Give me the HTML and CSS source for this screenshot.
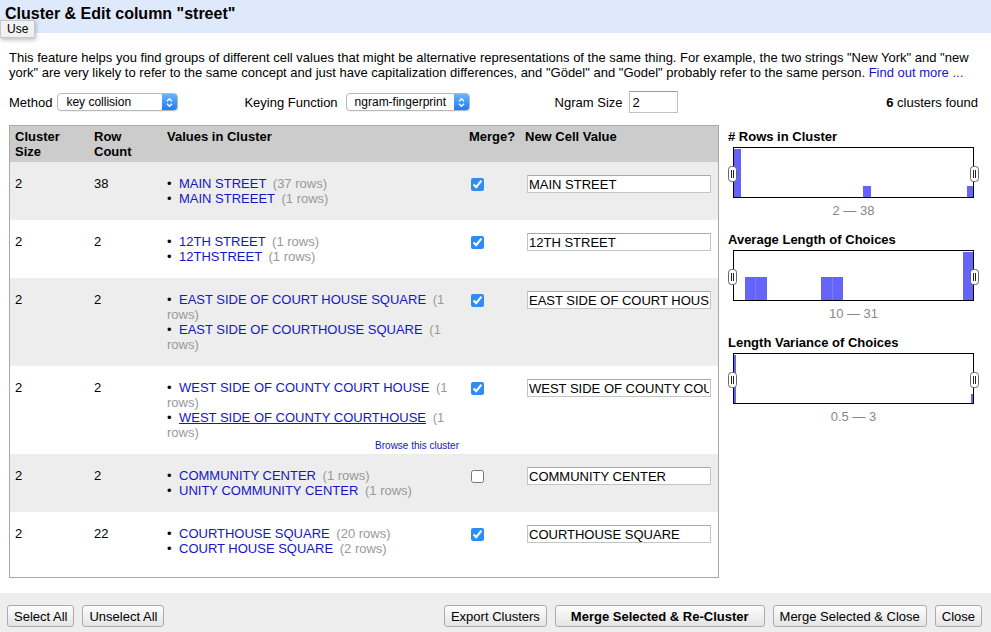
FILE: index.html
```html
<!DOCTYPE html>
<html>
<head>
<meta charset="utf-8">
<title>Cluster &amp; Edit column "street"</title>
<link rel="stylesheet" href="styles.css">
</head>
<body>
<div class="dialog">
  <div class="titlebar">Cluster &amp; Edit column "street"</div>
  <div class="tooltip">Use</div>
  <div class="content">
    <p class="desc">This feature helps you find groups of different cell values that might be alternative representations of the same thing. For example, the two strings "New York" and "new york" are very likely to refer to the same concept and just have capitalization differences, and "Gödel" and "Godel" probably refer to the same person. <a href="#">Find out more ...</a></p>

    <div class="controls">
      <span class="label">Method</span>
      <div class="select sel-method">
        <select><option>key collision</option></select>
        <span class="stepper"><svg width="7" height="11" viewBox="0 0 7 11"><path d="M1 4.2 L3.5 1.7 L6 4.2 M1 6.8 L3.5 9.3 L6 6.8" fill="none" stroke="#fff" stroke-width="1.3"/></svg></span>
      </div>
      <span class="label lbl-keying">Keying Function</span>
      <div class="select sel-keying">
        <select><option>ngram-fingerprint</option></select>
        <span class="stepper"><svg width="7" height="11" viewBox="0 0 7 11"><path d="M1 4.2 L3.5 1.7 L6 4.2 M1 6.8 L3.5 9.3 L6 6.8" fill="none" stroke="#fff" stroke-width="1.3"/></svg></span>
      </div>
      <span class="label lbl-ngram">Ngram Size</span>
      <input class="ngram" type="text" value="2">
      <span class="found"><b>6</b> clusters found</span>
    </div>

    <div class="main">
      <div class="table-wrap">
        <table class="clusters">
          <colgroup>
            <col class="w1"><col class="w2"><col class="w3"><col class="w4"><col class="w5">
          </colgroup>
          <thead>
            <tr><th>Cluster Size</th><th>Row Count</th><th>Values in Cluster</th><th class="c-merge">Merge?</th><th>New Cell Value</th></tr>
          </thead>
          <tbody>
            <tr class="odd">
              <td>2</td><td>38</td>
              <td><ul class="values"><li><a href="#">MAIN STREET</a> <span class="count">(37 rows)</span></li><li><a href="#">MAIN STREEET</a> <span class="count">(1 rows)</span></li></ul></td>
              <td class="c-merge"><input type="checkbox" checked></td>
              <td class="c-new"><input class="newval" type="text" value="MAIN STREET"></td>
            </tr>
            <tr>
              <td>2</td><td>2</td>
              <td><ul class="values"><li><a href="#">12TH STREET</a> <span class="count">(1 rows)</span></li><li><a href="#">12THSTREET</a> <span class="count">(1 rows)</span></li></ul></td>
              <td class="c-merge"><input type="checkbox" checked></td>
              <td class="c-new"><input class="newval" type="text" value="12TH STREET"></td>
            </tr>
            <tr class="odd">
              <td>2</td><td>2</td>
              <td><ul class="values"><li><a href="#">EAST SIDE OF COURT HOUSE SQUARE</a> <span class="count">(1 rows)</span></li><li><a href="#">EAST SIDE OF COURTHOUSE SQUARE</a> <span class="count">(1 rows)</span></li></ul></td>
              <td class="c-merge"><input type="checkbox" checked></td>
              <td class="c-new"><input class="newval" type="text" value="EAST SIDE OF COURT HOUSE SQUARE"></td>
            </tr>
            <tr>
              <td>2</td><td>2</td>
              <td class="c-values"><ul class="values"><li><a href="#">WEST SIDE OF COUNTY COURT HOUSE</a> <span class="count">(1 rows)</span></li><li><a href="#" class="hover">WEST SIDE OF COUNTY COURTHOUSE</a> <span class="count">(1 rows)</span></li></ul><a href="#" class="browse">Browse this cluster</a></td>
              <td class="c-merge"><input type="checkbox" checked></td>
              <td class="c-new"><input class="newval" type="text" value="WEST SIDE OF COUNTY COURTHOUSE"></td>
            </tr>
            <tr class="odd">
              <td>2</td><td>2</td>
              <td><ul class="values"><li><a href="#">COMMUNITY CENTER</a> <span class="count">(1 rows)</span></li><li><a href="#">UNITY COMMUNITY CENTER</a> <span class="count">(1 rows)</span></li></ul></td>
              <td class="c-merge"><input type="checkbox"></td>
              <td class="c-new"><input class="newval" type="text" value="COMMUNITY CENTER"></td>
            </tr>
            <tr>
              <td>2</td><td>22</td>
              <td><ul class="values"><li><a href="#">COURTHOUSE SQUARE</a> <span class="count">(20 rows)</span></li><li><a href="#">COURT HOUSE SQUARE</a> <span class="count">(2 rows)</span></li></ul></td>
              <td class="c-merge"><input type="checkbox" checked></td>
              <td class="c-new"><input class="newval" type="text" value="COURTHOUSE SQUARE"></td>
            </tr>
          </tbody>
        </table>
      </div>

      <div class="facets">
        <div class="facet">
          <h3># Rows in Cluster</h3>
          <div class="hist">
            <svg width="239" height="49" viewBox="0 0 239 49">
              <rect x="0" y="1" width="7" height="48" fill="#6464fa"/>
              <rect x="129" y="38" width="8" height="11" fill="#6464fa"/>
              <rect x="233" y="38" width="6" height="11" fill="#6464fa"/>
            </svg>
            <span class="handle h-left"><svg width="9" height="16" viewBox="0 0 9 16"><rect x="0.5" y="0.5" width="8" height="15" rx="3" fill="#fff" stroke="#666"/><path d="M3.5 4 V12 M5.5 4 V12" stroke="#222" stroke-width="1"/></svg></span>
            <span class="handle h-right"><svg width="9" height="16" viewBox="0 0 9 16"><rect x="0.5" y="0.5" width="8" height="15" rx="3" fill="#fff" stroke="#666"/><path d="M3.5 4 V12 M5.5 4 V12" stroke="#222" stroke-width="1"/></svg></span>
          </div>
          <div class="range">2 — 38</div>
        </div>
        <div class="facet">
          <h3>Average Length of Choices</h3>
          <div class="hist">
            <svg width="239" height="49" viewBox="0 0 239 49">
              <rect x="11" y="26" width="22" height="23" fill="#6464fa"/>
              <path d="M21.5 26 V49" stroke="#7c7cfb" stroke-width="1"/>
              <rect x="87" y="26" width="22" height="23" fill="#6464fa"/>
              <path d="M98.5 26 V49" stroke="#7c7cfb" stroke-width="1"/>
              <rect x="229" y="1" width="10" height="48" fill="#6464fa"/>
            </svg>
            <span class="handle h-left"><svg width="9" height="16" viewBox="0 0 9 16"><rect x="0.5" y="0.5" width="8" height="15" rx="3" fill="#fff" stroke="#666"/><path d="M3.5 4 V12 M5.5 4 V12" stroke="#222" stroke-width="1"/></svg></span>
            <span class="handle h-right"><svg width="9" height="16" viewBox="0 0 9 16"><rect x="0.5" y="0.5" width="8" height="15" rx="3" fill="#fff" stroke="#666"/><path d="M3.5 4 V12 M5.5 4 V12" stroke="#222" stroke-width="1"/></svg></span>
          </div>
          <div class="range">10 — 31</div>
        </div>
        <div class="facet">
          <h3>Length Variance of Choices</h3>
          <div class="hist">
            <svg width="239" height="49" viewBox="0 0 239 49">
              <rect x="0" y="1" width="2" height="48" fill="#6464fa"/>
              <rect x="237" y="40" width="2" height="9" fill="#6464fa"/>
            </svg>
            <span class="handle h-left"><svg width="9" height="16" viewBox="0 0 9 16"><rect x="0.5" y="0.5" width="8" height="15" rx="3" fill="#fff" stroke="#666"/><path d="M3.5 4 V12 M5.5 4 V12" stroke="#222" stroke-width="1"/></svg></span>
            <span class="handle h-right"><svg width="9" height="16" viewBox="0 0 9 16"><rect x="0.5" y="0.5" width="8" height="15" rx="3" fill="#fff" stroke="#666"/><path d="M3.5 4 V12 M5.5 4 V12" stroke="#222" stroke-width="1"/></svg></span>
          </div>
          <div class="range">0.5 — 3</div>
        </div>
      </div>
    </div>
  </div>

  <div class="footer">
    <div class="btn-group">
      <button class="btn">Select All</button>
      <button class="btn">Unselect All</button>
    </div>
    <div class="btn-group">
      <button class="btn">Export Clusters</button>
      <button class="btn primary">Merge Selected &amp; Re-Cluster</button>
      <button class="btn">Merge Selected &amp; Close</button>
      <button class="btn">Close</button>
    </div>
  </div>
</div>
</body>
</html>
```

FILE: styles.css
```css
* { box-sizing: border-box; }

body {
  margin: 0;
  font-family: "Liberation Sans", Arial, Helvetica, sans-serif;
  font-size: 13px;
  color: #000;
  background: #fff;
}

a { color: #1515c8; text-decoration: none; }

.dialog {
  position: relative;
  width: 991px;
  overflow: hidden;
}

.titlebar {
  height: 33px;
  background: #dee9fb;
  padding: 5px 5px;
  font-size: 16px;
  line-height: 18px;
  font-weight: bold;
}

.tooltip {
  position: absolute;
  left: 0;
  top: 20px;
  height: 18px;
  padding: 0 6px;
  font-size: 12px;
  line-height: 16px;
  background: #f1f1f1;
  border: 1px solid #c9c9c9;
  box-shadow: 1px 2px 4px rgba(0, 0, 0, 0.25);
}

.content { padding: 0 9px; }

.desc {
  margin: 17px 0 0;
  line-height: 15px;
}

/* controls row */
.controls {
  display: flex;
  align-items: center;
  height: 22px;
  margin-top: 11px;
}

.select {
  display: inline-flex;
  height: 18px;
  border: 1px solid #b8b8b8;
  border-radius: 4px;
  overflow: hidden;
  background: #fff;
  box-shadow: 0 1px 1px rgba(0, 0, 0, 0.06);
}

.select select {
  appearance: none;
  -webkit-appearance: none;
  flex: 1;
  min-width: 0;
  height: 16px;
  border: 0;
  background: transparent;
  font-family: "Liberation Sans", Arial, sans-serif;
  font-size: 12px;
  color: #000;
  padding: 0 0 0 8px;
  outline: none;
}

.stepper {
  width: 15px;
  display: flex;
  align-items: center;
  justify-content: center;
  background: linear-gradient(#6cb4fb, #1b7ff4);
}

.sel-method { width: 121px; margin-left: 5px; }
.lbl-keying { margin-left: 66px; }
.sel-keying { width: 124px; margin-left: 8px; }
.lbl-ngram { margin-left: 85px; }

.ngram {
  width: 49px;
  height: 22px;
  margin-left: 6px;
  border: 1px solid #c2c2c2;
  border-top-color: #9d9d9d;
  padding: 0 3px;
  font-family: "Liberation Sans", Arial, sans-serif;
  font-size: 13px;
  color: #000;
}

.found { margin-left: auto; margin-right: 4px; }

/* main area */
.main {
  display: flex;
  gap: 9px;
  margin-top: 12px;
}

.table-wrap {
  width: 710px;
  height: 453px;
  border: 1px solid #a9a9a9;
  overflow: hidden;
  flex: none;
}

.clusters {
  width: 100%;
  border-collapse: collapse;
  table-layout: fixed;
}

.w1 { width: 79px; }
.w2 { width: 73px; }
.w3 { width: 302px; }
.w4 { width: 56px; }

.clusters th {
  background: #cccccc;
  text-align: left;
  vertical-align: top;
  font-weight: bold;
  line-height: 15px;
  padding: 3px 5px;
}

.clusters th.c-merge { padding-right: 0; }

.clusters td {
  vertical-align: top;
  line-height: 15px;
  padding: 14px 5px;
}

.clusters tr.odd td { background: #ededed; }

.values {
  list-style: none;
  margin: 0;
  padding: 0;
}

.values li::before {
  content: "•";
  display: inline-block;
  width: 12px;
}

.values a.hover { text-decoration: underline; }

.count { color: #999; margin-left: 3px; }

.c-values { position: relative; }

.browse {
  position: absolute;
  right: 5px;
  bottom: 2px;
  font-size: 10px;
  line-height: 12px;
}

.clusters td.c-merge { padding-top: 16px; padding-right: 0; }

.clusters td.c-merge input {
  display: block;
  width: 13px;
  height: 13px;
  margin: 0 0 0 2px;
  accent-color: #2e8cf5;
}

.clusters td.c-new { padding-top: 13px; }

.newval {
  display: block;
  width: 184px;
  height: 18px;
  margin-left: 2px;
  border: 1px solid #c4c4c4;
  border-top-color: #a8a8a8;
  padding: 0 1px;
  font-family: "Liberation Sans", Arial, sans-serif;
  font-size: 13px;
  color: #000;
  background: #fff;
}

/* facets */
.facets {
  width: 254px;
  padding-top: 4px;
}

.facet + .facet { margin-top: 14px; }

.facet h3 {
  margin: 0;
  font-size: 13px;
  line-height: 15px;
  font-weight: bold;
}

.hist {
  position: relative;
  width: 241px;
  height: 51px;
  margin: 3px 0 0 5px;
  border: 1px solid #000;
  background: #fff;
}

.hist svg { display: block; }

.handle {
  position: absolute;
  top: 18px;
  width: 9px;
  height: 16px;
  line-height: 0;
}

.h-left { left: -6px; }
.h-right { right: -6px; }

.range {
  width: 241px;
  margin: 5px 0 0 5px;
  text-align: center;
  color: #888;
  line-height: 15px;
}

/* footer */
.footer {
  margin-top: 15px;
  background: #eeeeee;
  padding: 12px 9px 20px 7px;
  display: flex;
  justify-content: space-between;
}

.btn-group { display: flex; gap: 8px; }

.btn {
  height: 22px;
  padding: 0 6px;
  font-family: "Liberation Sans", Arial, sans-serif;
  font-size: 13px;
  color: #000;
  border: 1px solid #acacac;
  border-radius: 3px;
  background: linear-gradient(#fdfdfd, #e4e4e4);
}

.btn.primary {
  font-weight: bold;
  padding: 0 15px;
}
```
